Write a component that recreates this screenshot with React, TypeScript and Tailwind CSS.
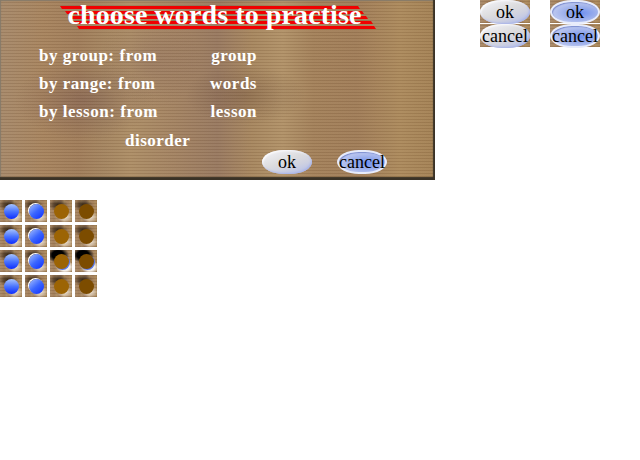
const wood =
  "bg-[#a4825a] bg-[repeating-linear-gradient(0deg,rgba(70,40,15,0.1)_0px,rgba(70,40,15,0.1)_1px,rgba(255,235,200,0.05)_1px,rgba(255,235,200,0.05)_3px),radial-gradient(ellipse_70px_40px_at_85px_100px,rgba(90,60,70,0.28)_0%,rgba(90,60,70,0)_100%),radial-gradient(ellipse_60px_30px_at_245px_95px,rgba(80,50,40,0.25)_0%,rgba(80,50,40,0)_100%),radial-gradient(ellipse_50px_50px_at_150px_60px,rgba(110,80,90,0.2)_0%,rgba(110,80,90,0)_100%),linear-gradient(90deg,#a5886a_0%,#a6835e_10%,#9f7c5a_18%,#a38460_24%,#ac8d66_30%,#a28262_40%,#977860_50%,#a6865f_58%,#b09168_65%,#a2805a_72%,#9f7c58_82%,#ab895c_92%,#a28054_100%)]"

const labelClass = "font-['Liberation_Serif',serif] text-white font-bold text-[17px] leading-none tracking-[0.5px]"

const rows = [
  { label: "by group:", from: "from", to: "group" },
  { label: "by range:", from: "from", to: "words" },
  { label: "by lesson:", from: "from", to: "lesson" },
]

function OvalButton({ label, pressed }: { label: string; pressed?: boolean }) {
  return (
    <div
      className={
        pressed
          ? "w-[50px] h-[24px] rounded-[22px/12px] border-2 border-[#e8ecfb] bg-[radial-gradient(ellipse_at_62%_55%,#6f90ee_0%,#a3b4ec_45%,#c8d0f2_80%,#8f9fdc_100%)] shadow-[inset_1px_1px_1px_#7f8fd0] flex items-center justify-center font-['Liberation_Serif',serif] text-[18px] leading-none text-black"
          : "w-[50px] h-[24px] rounded-[22px/12px] bg-[linear-gradient(160deg,#f6f6fb_0%,#dcdcde_45%,#d0d2e0_65%,#aebaea_100%)] shadow-[inset_-1px_-1px_2px_#a8b4e8,inset_1px_1px_2px_#ffffff] flex items-center justify-center font-['Liberation_Serif',serif] text-[18px] leading-none text-black"
      }
    >
      {label}
    </div>
  )
}

function Tile({ blue, dark, strong, ring }: { blue: boolean; dark?: boolean; strong?: boolean; ring?: boolean }) {
  return (
    <div className={`${wood} w-[22px] h-[22px] relative overflow-hidden flex items-center justify-center`}>
      <div
        className={
          strong
            ? "absolute inset-0 bg-[radial-gradient(ellipse_11px_8px_at_8px_5px,#000_0%,#000_55%,rgba(0,0,0,0)_100%),radial-gradient(ellipse_9px_7px_at_15px_17px,#fff_0%,rgba(255,255,255,0.85)_55%,rgba(255,255,255,0)_100%)]"
            : "absolute inset-0 bg-[radial-gradient(ellipse_10px_6px_at_8px_5px,rgba(20,10,0,0.8)_0%,rgba(20,10,0,0.45)_50%,rgba(20,10,0,0)_100%),radial-gradient(ellipse_8px_6px_at_15px_17px,rgba(255,250,240,0.85)_0%,rgba(255,250,240,0.45)_55%,rgba(255,250,240,0)_100%)]"
        }
      />
      <div
        className={
          blue
            ? ring
              ? "relative w-[15px] h-[15px] rounded-full shadow-[-1px_-1px_0_#fff] bg-[linear-gradient(140deg,#a8c0fc_0%,#3a66ff_50%,#0c2cff_100%)]"
              : "relative w-[15px] h-[15px] rounded-full bg-[linear-gradient(180deg,#a8c4fc_0%,#4a74ff_50%,#0c2cff_100%)]"
            : dark
              ? strong
                ? "relative w-[15px] h-[15px] rounded-full shadow-[1px_1px_0_#5a78e8] bg-[#7c4c00]"
                : "relative w-[15px] h-[15px] rounded-full bg-[#7c4c00]"
              : strong
                ? "relative w-[15px] h-[15px] rounded-full shadow-[1px_1px_0_#5a78e8] bg-[#9c6404]"
                : "relative w-[15px] h-[15px] rounded-full bg-[#9c6404]"
        }
      />
    </div>
  )
}

export default function App() {
  return (
    <div className="w-[640px] h-[460px] bg-white overflow-hidden">
      {/* top part */}
      <div className="flex items-start">
        <div
          className={`${wood} w-[435px] h-[180px] flex flex-col shadow-[inset_-2px_-3px_1px_#3a3226,inset_1px_1px_1px_#857a6a] pl-[39px]`}
        >
          {/* title */}
          <div className="relative -ml-[39px] w-[435px] h-[30px] flex justify-center pr-[6px]">
            <svg className="absolute left-0 top-0" width="435" height="30">
              <polygon points="60,6 358,6 360,9 62,9" fill="#f00000" />
              <polygon points="65,11 362,11 364,14 67,14" fill="#f00000" />
              <polygon points="69,16 366,16 368,19 71,19" fill="#f00000" />
              <polygon points="73,21 371,21 373,24 75,24" fill="#f00000" />
              <polygon points="77,26 374,26 376,29 79,29" fill="#f00000" />
            </svg>
            <span className="relative font-['Liberation_Serif',serif] text-white font-bold text-[28px] leading-[30px] tracking-[0.1px]">
              choose words to practise
            </span>
          </div>

          {/* filter rows */}
          <div className="mt-[17px] flex flex-col gap-[11px]">
            {rows.map((row) => (
              <div key={row.label} className={`${labelClass} w-[218px] flex h-[17px]`}>
                <span className="mr-[5px]">{row.label}</span>
                <span>{row.from}</span>
                <span className="ml-auto">{row.to}</span>
              </div>
            ))}
          </div>
          <div className={`${labelClass} ml-[86px] mt-[12px]`}>disorder</div>

          {/* buttons */}
          <div className="ml-[223px] mt-[1px] flex gap-[25px]">
            <OvalButton label="ok" />
            <OvalButton label="cancel" pressed />
          </div>
        </div>

        {/* button states */}
        <div className="ml-[45px] grid grid-cols-2 gap-x-[20px] gap-y-px">
          {[
            { label: "ok", pressed: false },
            { label: "ok", pressed: true },
            { label: "cancel", pressed: false },
            { label: "cancel", pressed: true },
          ].map((b, i) => (
            <div key={i} className={`${wood} w-[50px] h-[23px]`}>
              <OvalButton label={b.label} pressed={b.pressed} />
            </div>
          ))}
        </div>
      </div>

      {/* radio sprites */}
      <div className="mt-[20px] grid grid-cols-[repeat(4,22px)] gap-[3px]">
        <Tile blue />
        <Tile blue ring />
        <Tile blue={false} />
        <Tile blue={false} dark />
        <Tile blue />
        <Tile blue ring />
        <Tile blue={false} />
        <Tile blue={false} dark />
        <Tile blue />
        <Tile blue ring />
        <Tile blue={false} strong />
        <Tile blue={false} dark strong />
        <Tile blue />
        <Tile blue ring />
        <Tile blue={false} />
        <Tile blue={false} dark />
      </div>
    </div>
  )
}
